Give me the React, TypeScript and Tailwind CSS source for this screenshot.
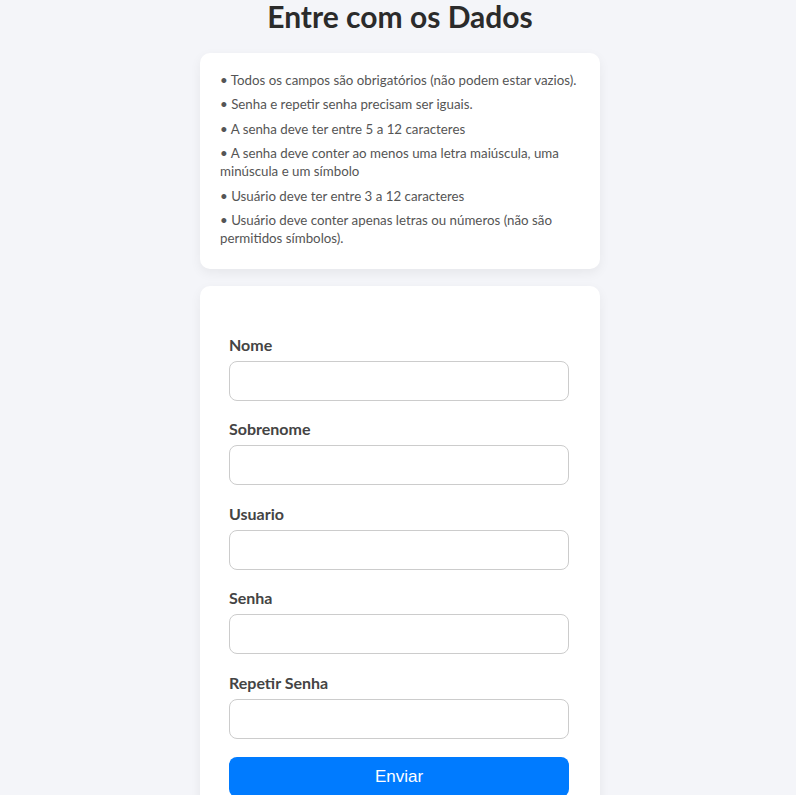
import React from "react";

const rules = [
  "Todos os campos são obrigatórios (não podem estar vazios).",
  "Senha e repetir senha precisam ser iguais.",
  "A senha deve ter entre 5 a 12 caracteres",
  "A senha deve conter ao menos uma letra maiúscula, uma minúscula e um símbolo",
  "Usuário deve ter entre 3 a 12 caracteres",
  "Usuário deve conter apenas letras ou números (não são permitidos símbolos).",
];

const fields = ["Nome", "Sobrenome", "Usuario", "Senha", "Repetir Senha"];

export default function App() {
  return (
    <div className="min-h-[795px] bg-[#f4f5f9] font-['Lato',sans-serif] text-[#333]">
      <div className="mx-auto w-[400px] translate-x-[2px]">
        <h1 className="text-center text-[30px] font-bold leading-[33px] text-[#2b2b2b]">
          Entre com os Dados
        </h1>

        <div className="mt-[20px] rounded-[10px] bg-white pl-5 pr-4 pt-[18px] pb-[22px] shadow-[0_4px_12px_rgba(0,0,0,0.06)]">
          {rules.map((r) => (
            <p key={r} className="mb-[6.4px] text-[13.3px] leading-[18px] text-[#555] last:mb-0">
              • {r}
            </p>
          ))}
        </div>

        <form className="mt-[17px] rounded-[10px] bg-white pl-[29px] pr-[31px] pt-[50px] pb-[30px] shadow-[0_4px_12px_rgba(0,0,0,0.06)]">
          <div className="flex flex-col gap-[19.5px]">
            {fields.map((f) => (
              <div key={f}>
                <label className="mb-[7px] block text-[16px] font-bold leading-[18px] text-[#444]">
                  {f}
                </label>
                <input
                  type={f.includes("Senha") ? "password" : "text"}
                  className="block h-10 w-full rounded-lg border border-[#ccc] bg-white px-3 outline-none"
                />
              </div>
            ))}
          </div>
          <button
            type="button"
            className="mt-[18px] h-10 w-full rounded-lg bg-[#007bff] font-['Liberation_Sans',sans-serif] text-[17px] text-white"
          >
            Enviar
          </button>
        </form>
      </div>
    </div>
  );
}
